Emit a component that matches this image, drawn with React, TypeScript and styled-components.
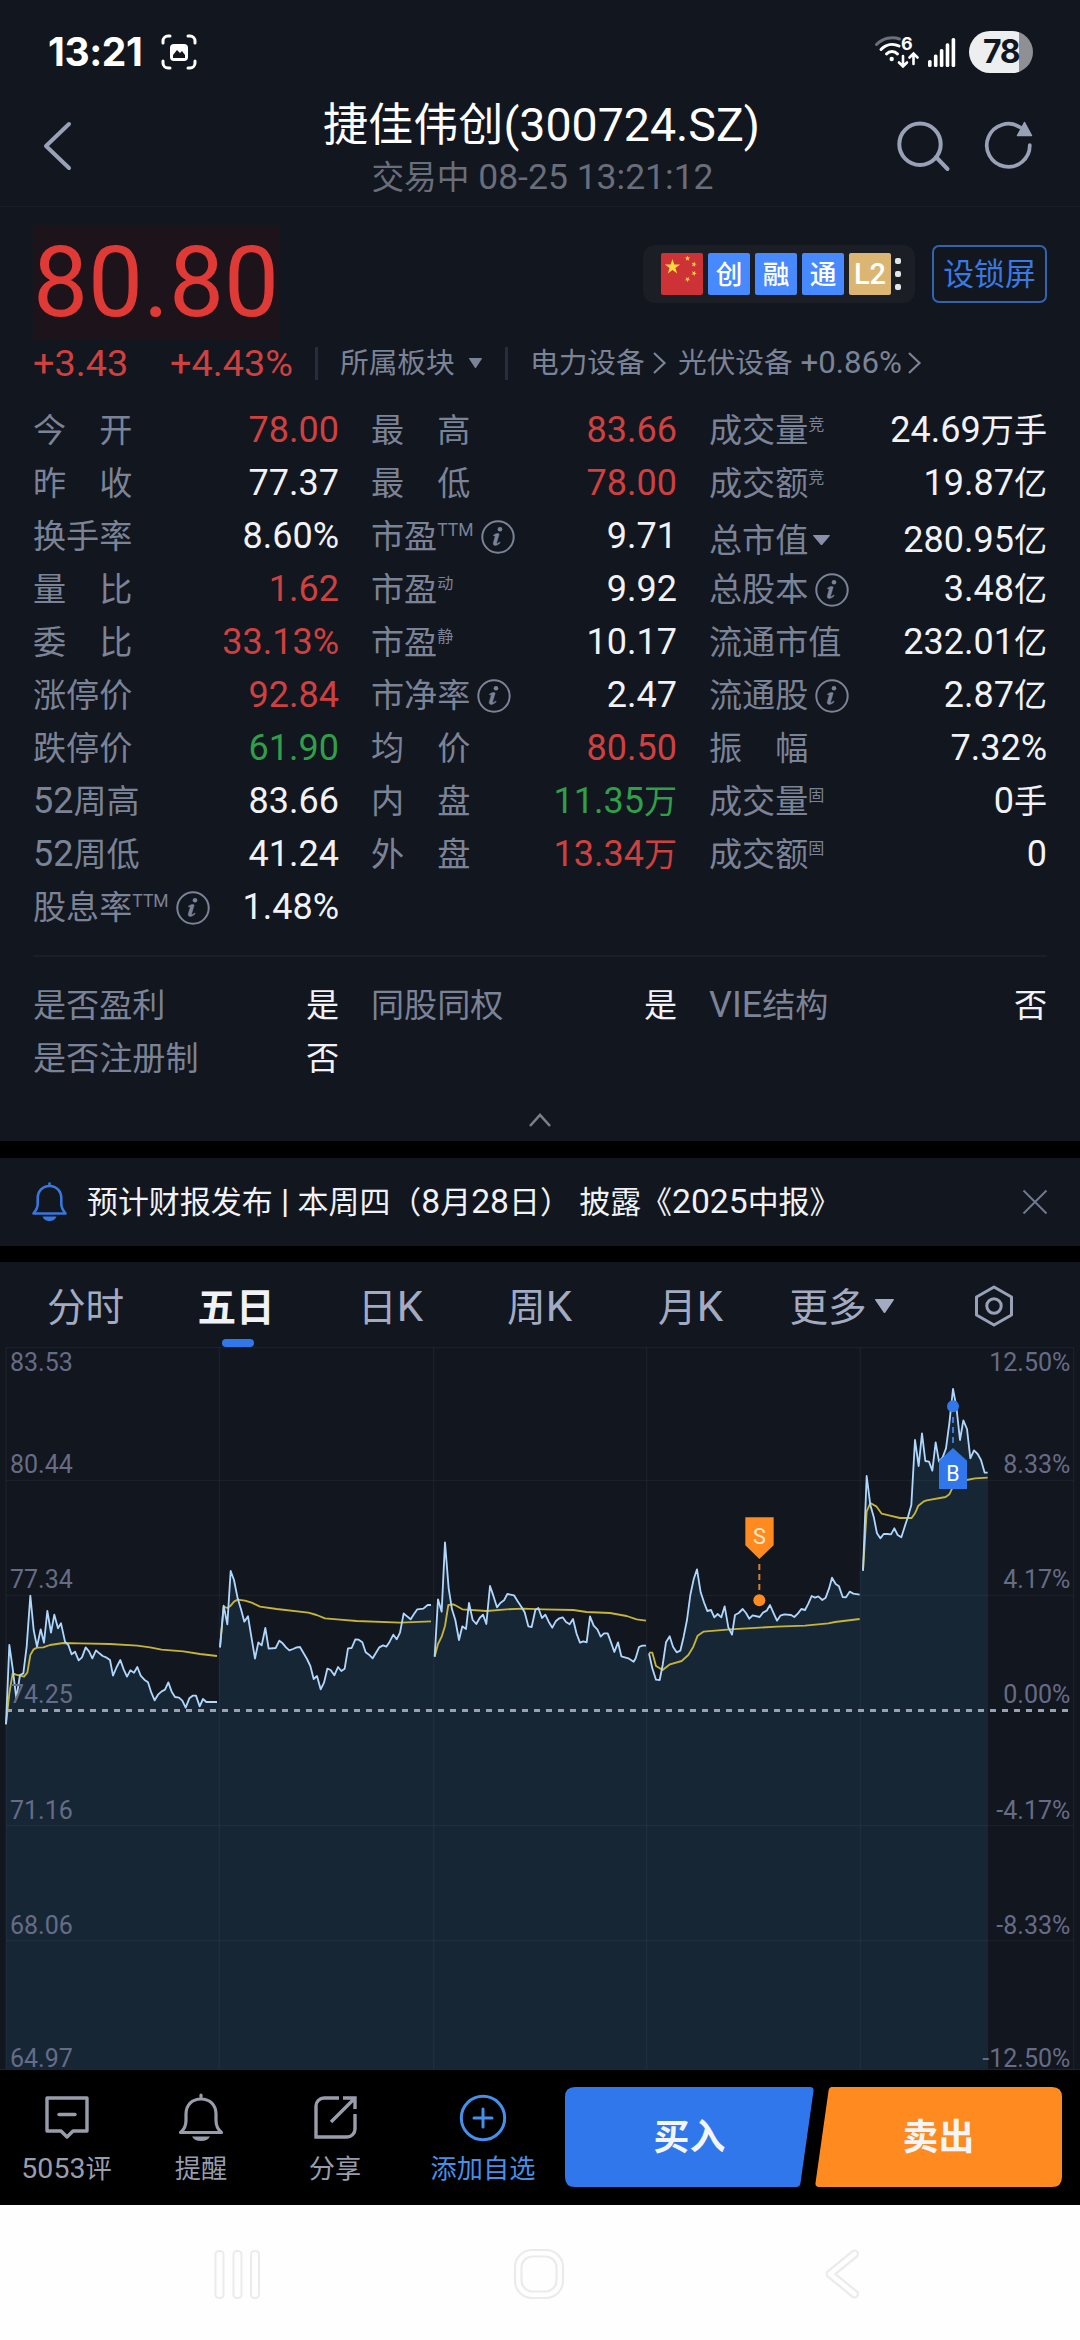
import React from "react";
import styled, { createGlobalStyle, css } from "styled-components";

const c = {
  bg: "#12161f",
  label: "#7b8396",
  text: "#f1f2f6",
  red: "#cf403f",
  green: "#2f9f48",
  icon: "#98a1b6",
  blue: "#3077eb",
  orange: "#ff8a20",
};

const GlobalStyle = createGlobalStyle`
  * { box-sizing: border-box; }
  body {
    margin: 0;
    background: #000;
    font-family: Roboto, "Noto Sans CJK SC", sans-serif;
    -webkit-font-smoothing: antialiased;
  }
  svg { display: block; flex: none; overflow: visible; }
`;

/* Han characters are set slightly smaller than the digits beside them. */
const Han = styled.span<{ $scale: number }>`
  font-size: ${(p) => p.$scale}em;
  line-height: 0;
`;

function Mixed({ children, scale = 0.92 }: { children: string; scale?: number }) {
  const runs = children.split(/([\u3000-\u9fff\uff00-\uffef]+)/);
  return (
    <>
      {runs.map((run, i) =>
        i % 2 ? <Han key={i} $scale={scale}>{run}</Han> : <React.Fragment key={i}>{run}</React.Fragment>
      )}
    </>
  );
}

const Page = styled.div`
  width: 1080px;
  height: 2340px;
  display: flex;
  flex-direction: column;
  background: #000;
  overflow: hidden;
  white-space: pre;
`;

/* ---------- status bar ---------- */
const StatusBar = styled.div`
  height: 78px;
  padding: 26px 47px 0 48px;
  display: flex;
  align-items: center;
  background: ${c.bg};
`;
const Clock = styled.div`
  font: 700 39px/52px Inter, sans-serif;
  letter-spacing: -0.4px;
  color: #fff;
  width: 113px;
`;
const StatusRight = styled.div`
  margin-left: auto;
  display: flex;
  align-items: center;
`;
const Battery = styled.div`
  width: 64px;
  height: 42px;
  margin-left: 13px;
  border-radius: 21px;
  background: linear-gradient(90deg, #edeeef 50px, #8f9096 50px);
  color: ${c.bg};
  font: 700 32px/42px Inter, sans-serif;
  letter-spacing: -1.6px;
  text-align: center;
`;

/* ---------- title bar ---------- */
const TitleBar = styled.header`
  height: 129px;
  display: grid;
  grid-template-columns: 200px 1fr 200px;
  background: ${c.bg};
  border-bottom: 1px solid #1a1e27;
`;
const BackCell = styled.div`
  padding: 42px 0 0 42px;
`;
const TitleCell = styled.div`
  padding-top: 19px;
  text-align: center;
`;
const Title = styled.div`
  padding-left: 3px;
  font-size: 46.5px;
  line-height: 56px;
  color: #fff;
`;
const Subtitle = styled.div`
  margin-top: 2px;
  font-size: 35.5px;
  line-height: 44px;
  color: #696e7a;
  padding-left: 5px;
`;
const ActionCell = styled.div`
  display: flex;
  gap: 34px;
  padding: 42px 0 0 15px;
`;

/* ---------- quote ---------- */
const Quote = styled.section`
  height: 934px;
  padding: 18px 33px 0;
  background: ${c.bg};
`;
const PriceRow = styled.div`
  display: flex;
  align-items: flex-start;
  height: 115px;
`;
const Price = styled.div`
  font-size: 98px;
  line-height: 115px;
  color: #e03a37;
  background: #1d131b;
`;
const BadgeGroup = styled.div`
  margin: 20px 17px 0 auto;
  width: 272px;
  height: 58px;
  padding: 8px 0 8px 18px;
  display: flex;
  gap: 5px;
  border-radius: 12px;
  background: #1b1e24;
`;
const Badge = styled.div<{ $bg: string }>`
  width: 42px;
  height: 42px;
  border-radius: 2px;
  background: ${(p) => p.$bg};
  color: #fff;
  font-size: 29px;
  font-weight: 500;
  line-height: 42px;
  text-align: center;
`;
const Dots = styled.div`
  width: 6px;
  height: 42px;
  margin-left: -1px;
  padding: 5px 0;
  display: flex;
  flex-direction: column;
  justify-content: space-between;
  i {
    height: 6px;
    border-radius: 2px;
    background: #e3e4e6;
  }
`;
const LockButton = styled.button`
  margin: 20px 0 0;
  width: 115px;
  height: 58px;
  padding: 0;
  border: 2px solid #3263ad;
  border-radius: 7px;
  background: none;
  color: #3b79e2;
  font: 33.5px/54px Roboto, "Noto Sans CJK SC", sans-serif;
`;
const ChangeRow = styled.div`
  display: flex;
  align-items: center;
  height: 46px;
  color: ${c.label};
  font-size: 31.2px;
  line-height: 46px;
`;
const Change = styled.div<{ $w: number }>`
  width: ${(p) => p.$w}px;
  font-size: 37.8px;
  color: ${c.red};
`;
const Divider = styled.i`
  width: 3px;
  height: 33px;
  margin-right: 22px;
  background: #272d3f;
`;
const Board = styled.div<{ $w: number }>`
  display: flex;
  align-items: center;
  width: ${(p) => p.$w}px;
`;
const Gap = styled.i<{ $w: number }>`
  flex: none;
  width: ${(p) => p.$w}px;
`;

const StatGrid = styled.div<{ $top: number }>`
  margin-top: ${(p) => p.$top}px;
  display: grid;
  grid-template-columns: repeat(3, 338px);
  grid-auto-rows: 53px;
`;
const Stat = styled.div<{ $last?: boolean; $low?: boolean }>`
  display: flex;
  align-items: center;
  justify-content: space-between;
  padding-right: ${(p) => (p.$last ? 0 : 32)}px;
  font-size: 36px;
  line-height: 53px;
  ${(p) => p.$low && css`padding-top: 7px;`}
`;
const StatLabel = styled.div`
  display: flex;
  align-items: center;
  color: ${c.label};
`;
const Sup = styled.sup`
  font-size: 17.5px;
  line-height: 20px;
  height: 20px;
  margin-top: -13px;
`;
const StatValue = styled.div<{ $color: string }>`
  color: ${(p) => p.$color};
`;
const Rule = styled.div<{ $top: number }>`
  height: 2px;
  margin-top: ${(p) => p.$top}px;
  background: #1a1e28;
`;
const Collapse = styled.div`
  margin-top: 27px;
  display: flex;
  justify-content: center;
`;

/* ---------- notice ---------- */
const Notice = styled.section`
  height: 88px;
  margin: 17px 0 16px;
  padding: 0 32px 0 30px;
  display: flex;
  align-items: center;
  background: ${c.bg};
`;
const NoticeText = styled.div`
  flex: 1;
  margin-left: 17px;
  font-size: 33.65px;
  line-height: 44px;
  color: ${c.text};
`;

/* ---------- tabs ---------- */
const Tabs = styled.nav`
  height: 85px;
  padding-left: 10px;
  display: grid;
  grid-template-columns: 151px 150px 159px 139px 163px 139px 165px;
  background: ${c.bg};
`;
const Tab = styled.div<{ $active?: boolean }>`
  position: relative;
  display: flex;
  justify-content: center;
  align-items: center;
  height: 88px;
  font-size: 42px;
  color: #a3abc2;
  ${(p) =>
    p.$active &&
    css`
      color: ${c.text};
      font-weight: 700;
      &::after {
        content: "";
        position: absolute;
        left: 50%;
        top: 77px;
        width: 32px;
        height: 8px;
        margin-left: -14px;
        border-radius: 4px;
        background: ${c.blue};
      }
    `}
`;

/* ---------- bottom bar ---------- */
const BottomBar = styled.footer`
  position: relative;
  height: 136px;
  display: flex;
  border-top: 1px solid #20242c;
  background: #000;
`;
const Action = styled.div<{ $w: number; $color?: string }>`
  width: ${(p) => p.$w}px;
  padding-top: 22px;
  display: flex;
  flex-direction: column;
  align-items: center;
  color: ${(p) => p.$color || "#989dab"};
  font-size: 28.5px;
  line-height: 40px;
  svg { margin-bottom: 7px; }
`;
const Trade = styled.button<{ $bg: string; $w: number; $shape: string; $ml: number }>`
  width: ${(p) => p.$w}px;
  height: 100px;
  margin: 17px 0 0 ${(p) => p.$ml}px;
  padding: 0;
  border: 0;
  background: ${(p) => p.$bg};
  clip-path: path("${(p) => p.$shape}");
  color: #f3f5fa;
  font: 700 39px/100px Roboto, "Noto Sans CJK SC", sans-serif;
`;
const SystemNav = styled.div`
  flex: 1;
  padding: 43px 219px 0 213px;
  display: grid;
  grid-template-columns: 48px 54px 38px;
  justify-content: space-between;
  background: #fefefe;
  svg:nth-child(2) { margin-left: -3px; }
`;

/* ---------- icons ---------- */
const CaptureIcon = () => (
  <svg width="36" height="36" viewBox="0 0 36 36" fill="none" stroke="#fff" strokeWidth="3" strokeLinecap="round">
    <path d="M2 9V7a5 5 0 0 1 5-5h2M27 2h2a5 5 0 0 1 5 5v2M34 27v2a5 5 0 0 1-5 5h-2M9 34H7a5 5 0 0 1-5-5v-2" />
    <rect x="9" y="10" width="18" height="17" rx="4" fill="#fff" stroke="none" />
    <path d="M12 24v-3l4-5 3 3 2-2 3 4v3z" fill={c.bg} stroke="none" />
  </svg>
);
const WifiIcon = () => (
  <svg width="46" height="34" viewBox="0 0 46 34" fill="none" stroke="#fff" strokeWidth="3" strokeLinecap="round">
    <path d="M2.500 9.500C9 3 18 1.200 25.500 4" stroke="#6d7078" />
    <path d="M7 14.500C12 9.200 19 8 25 11" />
    <path d="M12.500 19c3-3.300 8-3.300 11 0" />
    <circle cx="17.700" cy="24" r="2.200" fill="#fff" stroke="none" />
    <text x="27" y="14.500" fontFamily="Inter" fontWeight="700" fontSize="18" fill="#fff" stroke="none">6</text>
    <path d="M29 21v10M25 27.500l4 4 4-4M39.500 29V19M35.500 22.500l4-4 4 4" strokeWidth="2.600" />
  </svg>
);
const SignalIcon = () => (
  <svg width="28" height="30" viewBox="0 0 28 30" fill="#fff">
    <rect x="0" y="23" width="3.600" height="7" rx="1.500" />
    <rect x="5.900" y="17.500" width="3.600" height="12.500" rx="1.500" />
    <rect x="11.800" y="12" width="3.600" height="18" rx="1.500" />
    <rect x="17.700" y="6.300" width="3.600" height="23.700" rx="1.500" />
    <rect x="23.600" y="1" width="3.600" height="29" rx="1.500" />
  </svg>
);
const BackIcon = () => (
  <svg width="30" height="52" viewBox="0 0 30 52" fill="none" stroke={c.icon} strokeWidth="4" strokeLinecap="round" strokeLinejoin="round">
    <path d="M27 4L4 26l23 22" />
  </svg>
);
const SearchIcon = () => (
  <svg width="56" height="56" viewBox="0 0 56 56" fill="none" stroke={c.icon} strokeWidth="4" strokeLinecap="round">
    <circle cx="25" cy="24.300" r="20.700" />
    <path d="M41 37l11.500 12" />
  </svg>
);
const ReloadIcon = () => (
  <svg width="52" height="52" viewBox="0 0 52 52" fill="none" stroke={c.icon} strokeWidth="3.700" strokeLinecap="round">
    <path d="M44.800 25A21.500 21.500 0 1 1 35.500 7.600" />
    <path d="M39.500 2.500l-7 13h14z" fill={c.icon} strokeWidth="1.500" strokeLinejoin="round" />
  </svg>
);
const STAR = "M0-8L1.800-2.500H7.600L2.900.9 4.700 6.500 0 3.100-4.700 6.500-2.900.9-7.600-2.500H-1.800z";
const FlagIcon = () => (
  <svg width="42" height="42" viewBox="0 0 42 42" fill="#ffd93b">
    <path d={STAR} transform="translate(11.500 14)" />
    {[[26.5, 5.5], [33, 11.3], [33, 20.3], [26.5, 26.3]].map(([x, y], i) => (
      <path key={i} d={STAR} transform={`translate(${x} ${y}) rotate(${i * 12}) scale(.36)`} />
    ))}
  </svg>
);
const Triangle = ({ w, h, color = c.label }: { w: number; h: number; color?: string }) => (
  <svg width={w} height={h} viewBox="0 0 10 10" preserveAspectRatio="none" fill={color} stroke={color} strokeWidth="1" strokeLinejoin="round">
    <path d="M.5.5h9L5 9.500z" />
  </svg>
);
const Chevron = () => (
  <svg width="15" height="24" viewBox="0 0 15 24" fill="none" stroke={c.label} strokeWidth="2.200">
    <path d="M2 2l10.500 10L2 22" />
  </svg>
);
const InfoIcon = () => (
  <svg width="34" height="34" viewBox="0 0 34 34" fill="none" stroke={c.label} strokeWidth="2">
    <circle cx="17" cy="17" r="15.700" />
    <circle cx="19" cy="9.300" r="2.300" fill={c.label} stroke="none" />
    <path d="M12.500 15c1.500-1 3-1.600 4.500-1.600l1.200.6-2.500 8.600c-.3 1 .2 1.200 1 .8l2-1.400.5.7c-1.800 1.800-3.500 2.700-5 2.700-1.800 0-2.300-1.200-1.800-2.900l1.900-6.500-1.600-.2z" fill={c.label} stroke={c.label} strokeWidth=".5" />
  </svg>
);
const NoticeBell = () => (
  <svg width="40" height="42" viewBox="0 0 40 42" fill="none" stroke="#3878de" strokeWidth="2.600" strokeLinejoin="round">
    <path d="M19.500 1.500V5M3.500 32.500h32c-2-2.500-4.200-5-4.200-9.500v-5.500c0-7.500-5-12.500-11.800-12.500S7.700 10 7.700 17.500V23c0 4.500-2.200 7-4.200 9.500z" />
    <path d="M12.500 35.500h14c-1 2.800-3.800 4.700-7 4.700s-6-1.900-7-4.700z" fill="#3878de" stroke="none" />
  </svg>
);
const CloseIcon = () => (
  <svg width="26" height="26" viewBox="0 0 26 26" stroke="#6f788e" strokeWidth="2">
    <path d="M1.500 1.500l23 23M24.500 1.500l-23 23" />
  </svg>
);
const HexIcon = () => (
  <svg width="40" height="42" viewBox="0 0 40 42" fill="none" stroke={c.icon} strokeWidth="3" strokeLinejoin="round">
    <path d="M20 2l17.500 10v18L20 40 2.500 30V12z" />
    <circle cx="20" cy="21" r="7.200" />
  </svg>
);
const CommentIcon = () => (
  <svg width="48" height="50" viewBox="0 0 48 50" fill="none" stroke="#989dab" strokeWidth="3.400" strokeLinejoin="round" strokeLinecap="round">
    <path d="M4 6h40v33H30l-6 6-6-6H4z" />
    <path d="M16 22.500h16" />
  </svg>
);
const BellIcon = () => (
  <svg width="48" height="50" viewBox="0 0 48 50" fill="none" stroke="#989dab" strokeWidth="3.200" strokeLinejoin="round" strokeLinecap="round">
    <path d="M24 3v4M3.500 40.500h41c-3-2.500-5.500-6-5.500-12V22c0-9-6-15-15-15S9 13 9 22v6.500c0 6-2.500 9.500-5.500 12z" />
    <path d="M15 44.500h18c-1.500 3-4.800 4.500-9 4.500s-7.500-1.500-9-4.500z" fill="#989dab" stroke="none" />
  </svg>
);
const ShareIcon = () => (
  <svg width="48" height="50" viewBox="0 0 48 50" fill="none" stroke="#989dab" strokeWidth="3.400" strokeLinecap="butt">
    <path d="M28 6H13a8 8 0 0 0-8 8v31h31a8 8 0 0 0 8-8V22" />
    <path d="M20 30L43 7M32 6h12v11" />
  </svg>
);
const AddIcon = () => (
  <svg width="48" height="50" viewBox="0 0 48 50" fill="none" stroke="#4590ea" strokeWidth="3" strokeLinecap="round">
    <circle cx="24" cy="26" r="21.700" />
    <path d="M24 17v18M15 26h18" />
  </svg>
);
const RecentsIcon = () => (
  <svg width="48" height="52" viewBox="0 0 48 52" fill="none" stroke="#ebebeb" strokeWidth="2">
    {[2.5, 20.5, 38].map((x) => (
      <rect key={x} x={x} y="3" width="8" height="47" rx="3.500" />
    ))}
  </svg>
);
const HomeIcon = () => (
  <svg width="54" height="52" viewBox="0 0 54 52" fill="none" stroke="#ebebeb" strokeWidth="2.200">
    <rect x="3" y="2" width="48" height="48" rx="17" />
    <rect x="9.500" y="8.500" width="35" height="35" rx="11" />
  </svg>
);
const NavBackIcon = () => (
  <svg width="38" height="52" viewBox="0 0 38 52" fill="none" strokeLinecap="round" strokeLinejoin="round">
    <path d="M31.500 6L7 26l24.500 20" stroke="#ebebeb" strokeWidth="9" />
    <path d="M31.500 6L7 26l24.500 20" stroke="#fefefe" strokeWidth="4.600" />
  </svg>
);

/* ---------- quote data ---------- */
type Cell = { l: string; sup?: string; info?: boolean; drop?: boolean; v: string; k?: string };
const R = c.red;
const G = c.green;
const stats: (Cell | null)[] = [
  { l: "今　开", v: "78.00", k: R }, { l: "最　高", v: "83.66", k: R }, { l: "成交量", sup: "竞", v: "24.69万手" },
  { l: "昨　收", v: "77.37" }, { l: "最　低", v: "78.00", k: R }, { l: "成交额", sup: "竞", v: "19.87亿" },
  { l: "换手率", v: "8.60%" }, { l: "市盈", sup: "TTM", info: true, v: "9.71" }, { l: "总市值", drop: true, v: "280.95亿" },
  { l: "量　比", v: "1.62", k: R }, { l: "市盈", sup: "动", v: "9.92" }, { l: "总股本", info: true, v: "3.48亿" },
  { l: "委　比", v: "33.13%", k: R }, { l: "市盈", sup: "静", v: "10.17" }, { l: "流通市值", v: "232.01亿" },
  { l: "涨停价", v: "92.84", k: R }, { l: "市净率", info: true, v: "2.47" }, { l: "流通股", info: true, v: "2.87亿" },
  { l: "跌停价", v: "61.90", k: G }, { l: "均　价", v: "80.50", k: R }, { l: "振　幅", v: "7.32%" },
  { l: "52周高", v: "83.66" }, { l: "内　盘", v: "11.35万", k: G }, { l: "成交量", sup: "固", v: "0手" },
  { l: "52周低", v: "41.24" }, { l: "外　盘", v: "13.34万", k: R }, { l: "成交额", sup: "固", v: "0" },
  { l: "股息率", sup: "TTM", info: true, v: "1.48%" }, null, null,
];
const flags: (Cell | null)[] = [
  { l: "是否盈利", v: "是" }, { l: "同股同权", v: "是" }, { l: "VIE结构", v: "否" },
  { l: "是否注册制", v: "否" }, null, null,
];

function StatCells({ items }: { items: (Cell | null)[] }) {
  return (
    <>
      {items.map((s, i) =>
        s ? (
          <Stat key={i} $last={i % 3 === 2} $low={s.drop}>
            <StatLabel>
              <span><Mixed>{s.l}</Mixed></span>
              {s.sup && <Sup><Mixed>{s.sup}</Mixed></Sup>}
              {s.info && (<><Gap $w={7} /><InfoIcon /></>)}
              {s.drop && (<><Gap $w={5} /><Triangle w={17} h={10} color="#8890aa" /></>)}
            </StatLabel>
            <StatValue $color={s.k || c.text}><Mixed>{s.v}</Mixed></StatValue>
          </Stat>
        ) : (
          <i key={i} />
        )
      )}
    </>
  );
}

/* ---------- five-day chart: three units per pixel, one entry per session ---------- */
const sessions = [
  {
    x: 0, start: 18, end: 658,
    price: "18,1153 28,915 38,985 49,1075 60,1005 70,1000 80,920 91,767 101,870 111,920 122,868 132,908 142,813 153,878 163,824 174,865 183,850 195,905 205,915 215,943 225,935 236,961 246,952 257,922 267,934 277,955 288,931 298,940 308,948 320,953 330,960 339,1007 350,981 361,960 371,988 381,1010 391,991 402,998 412,981 422,1007 433,1019 444,1027 454,1058 464,1081 474,1064 485,1054 495,1049 505,1027 515,1055 525,1071 537,1073 547,1082 557,1103 568,1075 578,1067 588,1067 599,1099 609,1077 619,1086 651,1086",
    avg: "18,1153 28,1060 38,1000 48,1004 60,1007 72,1010 82,998 91,945 101,928 111,923 130,922 150,915 190,909 240,910 330,912 412,917 450,922 485,929 550,934 600,942 651,948",
  },
  {
    x: 0, start: 657, end: 1302,
    price: "660,922 671,797 682,853 692,693 702,720 713,775 723,808 733,845 744,829 754,890 765,956 775,907 785,916 796,864 806,926 827,924 838,902 848,910 858,922 868,931 879,927 890,922 900,921 910,938 921,957 931,978 941,1017 951,1008 962,1048 972,1028 982,986 992,990 1003,1006 1014,981 1024,993 1034,986 1044,925 1055,924 1066,898 1076,899 1087,907 1097,937 1107,944 1118,955 1128,938 1138,922 1149,916 1159,920 1169,905 1180,884 1190,898 1200,878 1211,820 1221,829 1232,838 1242,822 1252,808 1270,806 1283,795 1293,795",
    avg: "660,922 671,800 682,804 692,797 702,785 713,779 735,782 755,788 780,800 830,807 925,818 950,825 975,835 1020,839 1070,843 1200,848 1293,844",
  },
  {
    x: 1290, start: 11, end: 651,
    price: "14,950 24,778 35,815 45,607 56,745 66,808 76,840 87,900 97,859 108,867 117,789 128,840 139,852 149,834 159,824 169,852 180,738 190,767 201,802 211,789 222,781 232,762 252,766 263,784 274,800 284,817 295,859 305,861 316,810 325,804 336,834 346,824 356,845 367,863 377,844 388,835 398,832 408,846 419,853 429,837 440,882 450,908 460,904 470,907 480,829 491,857 502,868 512,890 522,880 533,880 543,907 553,936 564,907 574,949 595,955 611,965 617,955 627,921 637,917 648,917",
    avg: "14,950 24,912 35,890 45,858 55,795 70,793 80,798 97,808 170,813 230,808 280,806 340,808 430,810 470,816 540,819 590,828 620,838 648,842",
  },
  {
    x: 1290, start: 650, end: 1291,
    price: "657,940 667,985 678,1019 689,1020 698,975 708,907 719,889 729,920 740,937 751,932 761,890 771,840 781,765 791,718 801,688 812,757 822,787 832,813 843,810 853,832 863,822 874,832 884,799 895,862 906,884 915,825 926,819 938,807 948,819 958,836 968,826 989,831 999,818 1010,812 1020,795 1030,818 1041,842 1051,827 1063,823 1083,825 1093,831 1104,820 1114,807 1125,810 1135,791 1145,768 1155,773 1165,769 1177,780 1187,773 1197,746 1206,713 1217,732 1227,739 1238,771 1248,772 1259,755 1270,761 1289,764",
    avg: "657,938 667,938 678,978 698,990 720,973 755,963 775,945 790,920 803,887 820,875 900,868 1040,860 1125,857 1195,850 1215,846 1289,837",
  },
  {
    x: 2340, start: 240, end: 623,
    price: "249,692 260,408 271,495 281,530 291,580 301,595 311,582 322,582 333,583 343,565 353,585 364,592 374,560 384,530 394,495 405,300 416,378 426,280 436,363 447,365 457,392 467,307 477,365 488,352 498,325 508,250 519,147 529,200 540,300 550,241 561,267 571,355 582,331 593,342 603,360 614,398 623,398",
    avg: "249,692 260,515 271,489 290,500 305,521 330,527 360,534 395,534 405,520 415,497 430,485 440,481 497,471 508,463 519,440 560,420 585,415 623,413",
  },
];
const axis: [number, string, string][] = [
  [93, "83.53", "12.50%"],
  [399, "80.44", "8.33%"],
  [744, "77.34", "4.17%"],
  [1089, "74.25", "0.00%"],
  [1436, "71.16", "-4.17%"],
  [1781, "68.06", "-8.33%"],
  [2181, "64.97", "-12.50%"],
];
const BOTTOM = 2188;

const ChartBox = styled.section`
  height: 722px;
  background: ${c.bg};
`;

function Chart() {
  return (
    <ChartBox>
      <svg width="1080" height="722" viewBox="0 21 3240 2166" fontFamily="Roboto">
        {sessions.map((s, i) => {
          const firstY = s.price.split(" ")[0].split(",")[1];
          const lastY = s.price.split(",").pop();
          return (
            <polygon
              key={i}
              transform={`translate(${s.x} 0)`}
              points={`${s.start},${BOTTOM} ${s.start},${firstY} ${s.price} ${s.end},${lastY} ${s.end},${BOTTOM}`}
              fill="#172635"
              shapeRendering="crispEdges"
            />
          );
        })}
        <g stroke="#8fa0c0" strokeOpacity=".065" strokeWidth="4">
          {[18, 658, 1301, 1940, 2581, 3221].map((x) => (
            <path key={x} d={`M${x} 22V${BOTTOM}`} />
          ))}
          {[23, 421, 766, 1457, 1802].map((y) => (
            <path key={y} d={`M18 ${y}H3221`} />
          ))}
        </g>
        <path d="M18 1111.500H3204" stroke="#9aa1b4" strokeWidth="9" strokeDasharray="18 18" />
        <g fill="none" strokeLinejoin="round" strokeWidth="5.500">
          {sessions.map((s, i) => (
            <g key={i} transform={`translate(${s.x} 0)`}>
              <polyline points={s.avg} stroke="#c6b339" />
              <polyline points={s.price} stroke="#afd6fb" />
            </g>
          ))}
        </g>
        <g fill="#666c85" fontSize="75">
          {axis.map(([y, l, r]) => (
            <g key={y}>
              <text x="30" y={y}>{l}</text>
              <text x="3211" y={y} textAnchor="end">{r}</text>
            </g>
          ))}
        </g>
        <g transform="translate(2278 0)">
          <path d="M0 672V760" stroke="#d9802e" strokeWidth="6" strokeDasharray="18 12" />
          <circle cy="781" r="18" fill={c.orange} />
          <path d="M-42 532H43V616L0 657L-42 616Z" fill={c.orange} />
          <text y="612" textAnchor="middle" fontSize="65" fill="#ffeacb">S</text>
        </g>
        <g transform="translate(2859 0)">
          <path d="M0 231V320" stroke="#3b78d8" strokeWidth="6" strokeDasharray="18 12" />
          <circle cy="199" r="18" fill={c.blue} />
          <path d="M-42 447V362L0 324L42 362V447Z" fill={c.blue} />
          <text y="423" textAnchor="middle" fontSize="64" fill="#fff">B</text>
        </g>
      </svg>
    </ChartBox>
  );
}

export default function App() {
  return (
    <Page>
      <GlobalStyle />
      <StatusBar>
        <Clock>13:21</Clock>
        <CaptureIcon />
        <StatusRight>
          <WifiIcon />
          <Gap $w={8} />
          <SignalIcon />
          <Battery>78</Battery>
        </StatusRight>
      </StatusBar>

      <TitleBar>
        <BackCell><BackIcon /></BackCell>
        <TitleCell>
          <Title><Mixed scale={0.97}>捷佳伟创(300724.SZ)</Mixed></Title>
          <Subtitle><Mixed>交易中 08-25 13:21:12</Mixed></Subtitle>
        </TitleCell>
        <ActionCell>
          <SearchIcon />
          <ReloadIcon />
        </ActionCell>
      </TitleBar>

      <Quote>
        <PriceRow>
          <Price>80.80</Price>
          <BadgeGroup>
            <Badge $bg="#cd3237"><FlagIcon /></Badge>
            <Badge $bg="#4789ff"><Mixed>创</Mixed></Badge>
            <Badge $bg="#4789ff"><Mixed>融</Mixed></Badge>
            <Badge $bg="#4789ff"><Mixed>通</Mixed></Badge>
            <Badge $bg="#dbb673">L2</Badge>
            <Dots><i /><i /><i /></Dots>
          </BadgeGroup>
          <LockButton><Mixed>设锁屏</Mixed></LockButton>
        </PriceRow>
        <ChangeRow>
          <Change $w={137}>+3.43</Change>
          <Change $w={145}>+4.43%</Change>
          <Divider />
          <Board $w={165}>
            <span><Mixed>所属板块</Mixed></span>
            <Gap $w={14} />
            <Triangle w={13} h={10} />
          </Board>
          <Divider />
          <Board $w={148}>
            <span><Mixed>电力设备</Mixed></span>
            <Gap $w={7} />
            <Chevron />
          </Board>
          <span><Mixed>光伏设备 +0.86%</Mixed></span>
          <Gap $w={5} />
          <Chevron />
        </ChangeRow>
        <StatGrid $top={18}><StatCells items={stats} /></StatGrid>
        <Rule $top={21} />
        <StatGrid $top={22}><StatCells items={flags} /></StatGrid>
        <Collapse>
          <svg width="24" height="16" viewBox="0 0 24 16" fill="none" stroke="#7a7f8c" strokeWidth="2.600">
            <path d="M2 14L12 3l10 11" />
          </svg>
        </Collapse>
      </Quote>

      <Notice>
        <NoticeBell />
        <NoticeText><Mixed>预计财报发布 | 本周四（8月28日） 披露《2025中报》</Mixed></NoticeText>
        <CloseIcon />
      </Notice>

      <Tabs>
        <Tab><span><Mixed>分时</Mixed></span></Tab>
        <Tab $active><span><Mixed>五日</Mixed></span></Tab>
        <Tab><span><Mixed>日K</Mixed></span></Tab>
        <Tab><span><Mixed>周K</Mixed></span></Tab>
        <Tab><span><Mixed>月K</Mixed></span></Tab>
        <Tab>
          <span><Mixed>更多</Mixed></span>
          <Gap $w={8} />
          <Triangle w={19} h={14} color="#a3abc2" />
        </Tab>
        <Tab><HexIcon /></Tab>
      </Tabs>

      <Chart />

      <BottomBar>
        <Action $w={133}><CommentIcon /><span><Mixed>5053评</Mixed></span></Action>
        <Action $w={136}><BellIcon /><span><Mixed>提醒</Mixed></span></Action>
        <Action $w={132}><ShareIcon /><span><Mixed>分享</Mixed></span></Action>
        <Action $w={164} $color="#4590ea"><AddIcon /><span><Mixed>添加自选</Mixed></span></Action>
        <Trade
          $bg={c.blue} $w={249} $ml={0}
          $shape="M10 0H245Q249 0 248.500 4L235.500 96Q235 100 231 100H10Q0 100 0 90V10Q0 0 10 0Z"
        >
          <Mixed>买入</Mixed>
        </Trade>
        <Trade
          $bg={c.orange} $w={247} $ml={1}
          $shape="M17 0H237Q247 0 247 10V90Q247 100 237 100H4Q0 100 .5 96L13.500 4Q14 0 17 0Z"
        >
          <Mixed>卖出</Mixed>
        </Trade>
      </BottomBar>

      <SystemNav>
        <RecentsIcon />
        <HomeIcon />
        <NavBackIcon />
      </SystemNav>
    </Page>
  );
}
